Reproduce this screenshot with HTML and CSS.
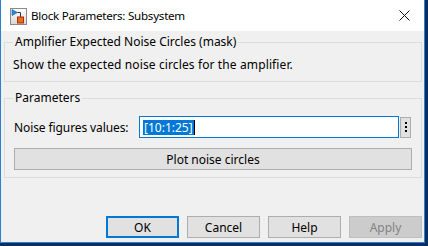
FILE: index.html
```html
<!DOCTYPE html>
<html>
<head>
<meta charset="utf-8">
<link rel="stylesheet" href="styles.css">
</head>
<body>
<div class="window">
  <div class="titlebar">
    <svg class="app-icon" width="17" height="17" viewBox="0 0 17 17">
      <defs>
        <linearGradient id="g" x1="0" y1="0" x2="0" y2="1">
          <stop offset="0" stop-color="#ffffff"/>
          <stop offset="1" stop-color="#d8d8d8"/>
        </linearGradient>
      </defs>
      <rect x="0.5" y="0.5" width="16" height="16" fill="url(#g)" stroke="#8a8a8a"/>
      <path d="M2 1.5 L7.5 4.5 L2 7.5 Z" fill="#2a8ad8" stroke="#1a5ea8" stroke-width="0.6"/>
      <path d="M7.5 4.5 H10.5 V9" fill="none" stroke="#333" stroke-width="1"/>
      <rect x="7.5" y="9" width="6" height="6" fill="#f06a1a" stroke="#a8300a"/>
    </svg>
    <span class="title">Block Parameters: Subsystem</span>
    <svg class="close" width="11" height="11" viewBox="0 0 11 11">
      <path d="M0.5 0.5 L10.5 10.5 M10.5 0.5 L0.5 10.5" stroke="#111" stroke-width="1"/>
    </svg>
  </div>
  <div class="content">
    <fieldset class="group first">
      <legend>Amplifier Expected Noise Circles (mask)</legend>
      <p class="desc">Show the expected noise circles for the amplifier.</p>
    </fieldset>
    <fieldset class="group params">
      <legend>Parameters</legend>
      <div class="row">
        <span class="label">Noise figures values:</span>
        <div class="edit"><span class="sel">[10:1:25]</span><span class="caret"></span></div>
        <div class="more"><span></span><span></span><span></span></div>
      </div>
      <div class="plot">Plot noise circles</div>
    </fieldset>
    <div class="buttons">
      <div class="btn ok">OK</div>
      <div class="btn">Cancel</div>
      <div class="btn">Help</div>
      <div class="btn disabled">Apply</div>
    </div>
  </div>
</div>
</body>
</html>
```
FILE: styles.css
```css
html, body {
  margin: 0;
  padding: 0;
}
body {
  width: 428px;
  height: 246px;
  background: #0b2f5e;
  font-family: "Noto Sans", "Open Sans", sans-serif;
  font-size: 12px;
  color: #000;
  overflow: hidden;
}
.window {
  width: 423px;
  height: 242px;
  border: 1px solid #2c7fcf;
  border-top: none;
  background: #f0f0f0;
  display: flex;
  flex-direction: column;
}
.titlebar {
  height: 31px;
  background: #fff;
  display: flex;
  align-items: center;
  padding-left: 9px;
  padding-right: 14px;
  flex: none;
}
.app-icon {
  flex: none;
  margin-top: 1px;
}
.title {
  margin-left: 4px;
  flex: 1;
  font-size: 11.6px;
  letter-spacing: -0.25px;
}
.close {
  flex: none;
}
.content {
  flex: 1;
  display: flex;
  flex-direction: column;
  padding: 0 2px 0 3px;
}
.group {
  margin: 0;
  border: 1px solid #dcdcdc;
  padding: 0 8px 0 8px;
  min-width: 0;
}
.group legend {
  padding: 0 2px;
  margin-left: 0;
  line-height: 16px;
}
.first {
  margin-top: 3px;
  height: 48px;
  box-sizing: border-box;
}
.desc {
  margin: 7px 0 0 0;
  line-height: 16px;
  padding-left: 0;
  letter-spacing: 0.12px;
}
.params {
  margin-top: 8px;
  height: 88px;
  box-sizing: border-box;
  padding-right: 10px;
}
.row {
  display: flex;
  align-items: center;
  margin-top: 10px;
  height: 22px;
}
.label {
  width: 125px;
  padding-left: 1px;
  flex: none;
  letter-spacing: -0.1px;
}
.edit {
  width: 257px;
  height: 20px;
  border: 1px solid #0078d7;
  background: #fff;
  display: flex;
  align-items: center;
  padding-left: 3px;
  box-sizing: content-box;
}
.sel {
  background: #0078d7;
  color: #fff;
  line-height: 15px;
  padding: 0 1px;
}
.caret {
  width: 1px;
  height: 15px;
  background: #000;
}
.more {
  margin-left: 1px;
  width: 9px;
  height: 19px;
  border: 1px solid #adadad;
  background: #e1e1e1;
  display: flex;
  flex-direction: column;
  align-items: center;
  justify-content: center;
  gap: 2px;
}
.more span {
  width: 2px;
  height: 2px;
  background: #000;
}
.plot {
  margin-top: 10px;
  height: 20px;
  border: 1px solid #adadad;
  background: #e1e1e1;
  display: flex;
  align-items: center;
  justify-content: center;
  margin-left: 1px;
  margin-right: -1px;
}
.buttons {
  display: flex;
  justify-content: flex-end;
  gap: 8px;
  margin-top: 38px;
  padding-right: 0;
}
.btn {
  width: 71px;
  height: 20px;
  border: 1px solid #adadad;
  background: #e1e1e1;
  display: flex;
  align-items: center;
  justify-content: center;
}
.btn.ok {
  border: 2px solid #0078d7;
  width: 69px;
  height: 18px;
}
.btn.disabled {
  background: #cccccc;
  border-color: #bfbfbf;
  color: #838383;
}
```
